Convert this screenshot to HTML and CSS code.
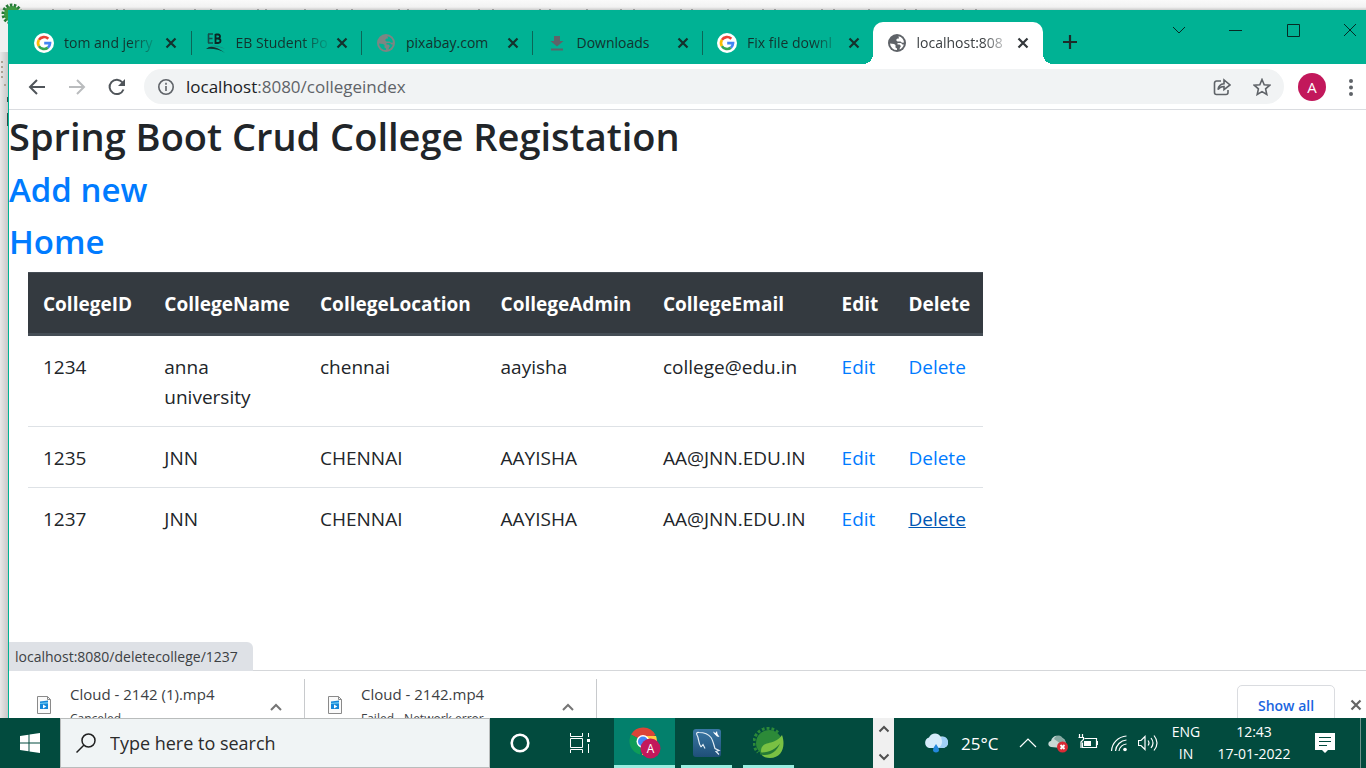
FILE: index.html
```html
<!DOCTYPE html>
<html lang="en">
<head>
<meta charset="utf-8">
<title>College index</title>
<link rel="stylesheet" href="styles.css">
</head>
<body>
<svg class="defs" aria-hidden="true">
  <symbol id="google" viewBox="0 0 20 20">
    <circle cx="10" cy="10" r="10" fill="#fff"/>
    <g fill="none" stroke-width="2.7">
      <path d="M14.3 5.8A6 6 0 0 0 4.9 6.9" stroke="#ea4335"/>
      <path d="M4.9 6.9a6 6 0 0 0 0 6.2" stroke="#fbbc05"/>
      <path d="M4.9 13.1a6 6 0 0 0 9 1.5" stroke="#34a853"/>
      <path d="M13.9 14.6A6 6 0 0 0 16 10.2H10.2" stroke="#4285f4"/>
    </g>
  </symbol>
  <symbol id="globe" viewBox="0 0 18 18">
    <circle cx="9" cy="9" r="9" fill="currentColor"/>
    <path d="M2 9.500l4 .5 1.500 1v2.500l1.500 1V16A7 7 0 0 1 2 9.500z" class="sea"/>
    <path d="M10.500 2.200a7 7 0 0 1 5.500 6.300l-2 .3-1.500-1.300h-3L8 6l1.500-1.500h1.500zM9.500 9h3.500l1.500 1.500h1.300a7 7 0 0 1-4.300 5l.5-2 1-1.500-1.500-1.500H9.500z" class="sea"/>
  </symbol>
  <symbol id="close" viewBox="0 0 12 12">
    <path d="M1.500 1.500l9 9M10.500 1.500l-9 9" stroke="currentColor" stroke-width="2.2" fill="none"/>
  </symbol>
  <symbol id="up" viewBox="0 0 12 8">
    <path d="M1 7l5-5 5 5" stroke="currentColor" stroke-width="2" fill="none"/>
  </symbol>
  <symbol id="video" viewBox="0 0 14 18">
    <path d="M.5.5h10l3 3v14H.5z" fill="#fafafa" stroke="#8a8a8a"/>
    <path d="M10.500.5v3h3" fill="none" stroke="#8a8a8a"/>
    <path d="M3 5.500l8-1v8.500H3z" fill="#1687d9"/>
    <path d="M3 7l8-1v1.500l-8 .5z" fill="#6cc9f2"/>
    <path d="M6 8.500v4l3.300-2z" fill="#fff"/>
  </symbol>
</svg>

<div class="desktop">
  <div class="behind" aria-hidden="true">
    <svg class="behind-logo" viewBox="0 0 22 22"><circle cx="11" cy="11" r="8" fill="#3c9a41"/><circle cx="11" cy="11" r="9" fill="none" stroke="#247a35" stroke-width="3" stroke-dasharray="2.500 1.500"/></svg>
    <div class="behind-title"></div>
    <svg class="behind-tools" viewBox="0 0 8 80"><g fill="#aaa294"><path d="M1 11h2v2H1zM1 16h2v2H1zM1 21h2v2H1zM1 26h2v2H1zM4 34h2v2H4z"/></g><path d="M7 47h1v5H7zM7 63h1v13H7z" fill="#305048"/></svg>
  </div>

  <section class="window">
    <header class="tabstrip">
      <nav class="tabs" aria-label="Tabs">
        <div class="tab"><svg class="fav fav-lg"><use href="#google"/></svg><span class="tab-title">tom and jerry</span><button class="x" aria-label="Close tab"><svg><use href="#close"/></svg></button></div>
        <div class="tab"><svg class="fav fav-lg" viewBox="0 0 20 20"><path d="M2 1h5M2 5.500h4.500M2 10h5M2.500 1v9" stroke="#174d4a" stroke-width="1.600" fill="none"/><path d="M9.500 1.500h2.500q2 .3 2 2t-2 2H9.500M12 5.500q2.500.3 2.500 2.200T12 10H9.500V1" stroke="#0b2524" stroke-width="1.800" fill="none"/><path d="M0 16q6-6 19 4-8-5-19-4z" fill="#12302f"/><path d="M2 14q8-4 17 2-8-4-17-2z" fill="#247a78"/></svg><span class="tab-title">EB Student Po</span><button class="x" aria-label="Close tab"><svg><use href="#close"/></svg></button></div>
        <div class="tab"><svg class="fav fav-muted"><use href="#globe"/></svg><span class="tab-title">pixabay.com</span><button class="x" aria-label="Close tab"><svg><use href="#close"/></svg></button></div>
        <div class="tab"><svg class="fav fav-down" viewBox="0 0 18 18"><path d="M6 2h6v5h3.500L9 12.500 2.500 7H6zM3 14.500h12v2H3z" fill="currentColor"/></svg><span class="tab-title">Downloads</span><button class="x" aria-label="Close tab"><svg><use href="#close"/></svg></button></div>
        <div class="tab"><svg class="fav fav-lg"><use href="#google"/></svg><span class="tab-title">Fix file downl</span><button class="x" aria-label="Close tab"><svg><use href="#close"/></svg></button></div>
        <div class="tab active"><svg class="fav"><use href="#globe"/></svg><span class="tab-title">localhost:808</span><button class="x" aria-label="Close tab"><svg><use href="#close"/></svg></button></div>
      </nav>
      <div class="strip-end">
        <button class="newtab" aria-label="New tab"><svg viewBox="0 0 16 16"><path d="M8 1v14M1 8h14" stroke="#1d2b29" stroke-width="2.200"/></svg></button>
        <div class="controls">
          <button aria-label="Search tabs"><svg viewBox="0 0 14 14"><path d="M1 4l6 6 6-6"/></svg></button>
          <button aria-label="Minimize"><svg viewBox="0 0 14 14"><path d="M0 7.500h13"/></svg></button>
          <button aria-label="Maximize"><svg viewBox="0 0 14 14"><path d="M1.500 1.500h12v12h-12z"/></svg></button>
          <button aria-label="Close"><svg viewBox="0 0 14 14"><path d="M1 1l12 12M13 1L1 13"/></svg></button>
        </div>
      </div>
    </header>

    <div class="toolbar">
      <button class="nav" aria-label="Back"><svg viewBox="0 0 18 18"><path d="M17 9H2M9 2L2 9l7 7"/></svg></button>
      <button class="nav off" aria-label="Forward"><svg viewBox="0 0 18 18"><path d="M1 9h15M9 2l7 7-7 7"/></svg></button>
      <button class="nav" aria-label="Reload"><svg viewBox="0 0 18 18"><path d="M15.500 11.500A7.200 7.200 0 1 1 14.500 4.500"/><path d="M17 1v7h-7z" class="solid"/></svg></button>
      <div class="omnibox">
        <svg class="info" viewBox="0 0 18 18"><circle cx="9" cy="9" r="7.200"/><path d="M9 8v5M9 4.800v2"/></svg>
        <div class="url" role="textbox" aria-label="Address"><b>localhost</b>:8080/collegeindex</div>
        <button aria-label="Share"><svg viewBox="0 0 18 18"><path d="M8 3H3.500A2 2 0 0 0 1.500 5v9.500a2 2 0 0 0 2 2H13a2 2 0 0 0 2-2V12"/><path d="M5 11.500C5.500 7.500 7.500 6 11 5.700V2l6 5-6 4.700V8.500c-3 0-4.500.8-6 3z"/></svg></button>
        <button aria-label="Bookmark"><svg viewBox="0 0 18 18"><path d="M9 1.500l2.200 5.200 5.600.5-4.200 3.700 1.200 5.600L9 13.600l-4.800 2.900 1.200-5.600L1.200 7.200l5.600-.5z"/></svg></button>
      </div>
      <button class="avatar" aria-label="Profile">A</button>
      <button class="menu" aria-label="Menu"><svg viewBox="0 0 4 18"><circle cx="2" cy="3" r="2"/><circle cx="2" cy="9.500" r="2"/><circle cx="2" cy="16" r="2"/></svg></button>
    </div>

    <main class="page">
      <h1>Spring Boot Crud College Registation</h1>
      <h2><a href="#new">Add new</a></h2>
      <h2><a href="#home">Home</a></h2>
      <table>
        <colgroup><col class="c-id"><col class="c-name"><col class="c-loc"><col class="c-admin"><col class="c-mail"><col class="c-edit"><col></colgroup>
        <thead><tr><th>CollegeID</th><th>CollegeName</th><th>CollegeLocation</th><th>CollegeAdmin</th><th>CollegeEmail</th><th>Edit</th><th>Delete</th></tr></thead>
        <tbody>
          <tr><td>1234</td><td>anna university</td><td>chennai</td><td>aayisha</td><td>college@edu.in</td><td><a href="#e1">Edit</a></td><td><a href="#d1">Delete</a></td></tr>
          <tr><td>1235</td><td>JNN</td><td>CHENNAI</td><td>AAYISHA</td><td>AA@JNN.EDU.IN</td><td><a href="#e2">Edit</a></td><td><a href="#d2">Delete</a></td></tr>
          <tr><td>1237</td><td>JNN</td><td>CHENNAI</td><td>AAYISHA</td><td>AA@JNN.EDU.IN</td><td><a href="#e3">Edit</a></td><td><a class="hovered" href="#d3">Delete</a></td></tr>
        </tbody>
      </table>
      <div class="status">localhost:8080/deletecollege/1237</div>
    </main>

    <footer class="downloads">
      <div class="dl"><svg class="file"><use href="#video"/></svg><div class="dl-text"><p>Cloud - 2142 (1).mp4</p><small>Canceled</small></div><button aria-label="Options"><svg><use href="#up"/></svg></button></div>
      <div class="dl"><svg class="file"><use href="#video"/></svg><div class="dl-text"><p>Cloud - 2142.mp4</p><small>Failed - Network error</small></div><button aria-label="Options"><svg><use href="#up"/></svg></button></div>
      <button class="showall">Show all</button>
      <button class="dl-close" aria-label="Close downloads"><svg><use href="#close"/></svg></button>
    </footer>
  </section>
</div>

<div class="taskbar">
  <button class="start" aria-label="Start"><svg viewBox="0 0 20 20"><path d="M0 3l8.500-1.200v7.700H0zM9.500 1.600L20 0v9.500H9.500zM0 10.500h8.500v7.700L0 17zM9.500 10.500H20V20L9.500 18.400z" fill="#fff"/></svg></button>
  <label class="search"><svg viewBox="0 0 20 20"><circle cx="12.500" cy="7.500" r="6.500"/><path d="M8 12l-7.500 7.500"/></svg><input type="text" placeholder="Type here to search" aria-label="Search"></label>
  <button class="task" aria-label="Cortana"><svg viewBox="0 0 20 20"><circle cx="10" cy="10" r="8.300" fill="none" stroke="#fff" stroke-width="2.600"/></svg></button>
  <button class="task" aria-label="Task view"><svg viewBox="0 0 20 20" fill="none" stroke="#fff"><path d="M.5 0v3.500h12V0M.5 5.500h12v9H.5zM.5 20v-3.500h12V20M18.500 0v4M18.500 11v9"/><path d="M17 6h3v3h-3z" fill="#fff" stroke="none"/></svg></button>
  <button class="app current" aria-label="Chrome"><svg viewBox="0 0 32 32"><path d="M14 14L2 7.500A14 14 0 0 1 26.500 8z" fill="#db4437"/><path d="M14 14L2 7.500a14 14 0 0 0 9 20z" fill="#0f9d58"/><path d="M14 9h13a14 14 0 0 1-14 19z" fill="#ffcd40"/><circle cx="14" cy="14.500" r="6.500" fill="#fff"/><circle cx="14" cy="14.500" r="5" fill="#4285f4"/><circle cx="21.500" cy="21.500" r="10" fill="#c2185b"/><text x="21.500" y="25.500" text-anchor="middle" class="badge-letter">A</text></svg></button>
  <button class="app" aria-label="MySQL Workbench"><svg viewBox="0 0 32 32"><defs><linearGradient id="my" x2="0" y2="1"><stop stop-color="#3a78a5"/><stop offset="1" stop-color="#1f4f78"/></linearGradient></defs><rect x="2" y="2" width="28" height="28" rx="3" fill="url(#my)"/><path d="M10 20C7 16 8 11 6 8c-1-2 0-3 2-2.500 6 0 9 1 12 5 2 3 3 8 4 11l4 2-3 1 3 3M10 20l2-2.500 2 4" fill="none" stroke="#e4eef5" stroke-width="1.200"/><path d="M22 4.500l2.500 1.500 1.500-2 .5 3 2 3-2.500-.5-3-3z" fill="#fff"/></svg></button>
  <button class="app" aria-label="Spring Tool Suite"><svg viewBox="0 0 32 32"><circle cx="16" cy="16" r="13" fill="#2c8a38"/><path d="M25 5.500A14 14 0 0 0 5 25.500" fill="none" stroke="#2c8a38" stroke-width="3" stroke-dasharray="2.800 2"/><path d="M29 8c4 11 0 23-12 23-6 0-9-2-9-7 0-11 14-5 21-16z" fill="#79c143"/><path d="M7 25.500c9 .5 15-3 20-9-4 9-10 13-20 11z" fill="#247a35"/></svg></button>
  <div class="tray">
    <div class="scroller"><button aria-label="Scroll up"><svg viewBox="0 0 12 8"><path d="M1.500 6.500L6 2l4.500 4.500"/></svg></button><button aria-label="Scroll down"><svg viewBox="0 0 12 8"><path d="M1.500 1.500L6 6l4.500-4.500"/></svg></button></div>
    <svg class="weather" viewBox="0 0 26 20"><path d="M6 15a5.500 5.500 0 0 1 0-10.500C8-.5 15-1 17.500 3.500c4-.5 7.500 2 7.500 6s-3 5.500-6 5.500z" fill="#d6ecfb"/><path d="M18 4.500c4-2 7 1 7 5S22 15 19 15h-4c4-2 5-6 3-10.500z" fill="#9fd0f6"/><path d="M13 11q6 8 0 8.500-6-.5 0-8.500z" fill="#2388dc"/></svg>
    <span class="temp">25°C</span>
    <svg class="ic chev" viewBox="0 0 18 20"><path d="M1 14l8-8 8 8"/></svg>
    <svg class="ic cloud" viewBox="0 0 20 20"><path d="M3 14C-1 13 0 8 3 8c1-5 7-7 10-3 4 0 5 3 4 6l-4 4z" fill="#c8d8d5" stroke="none"/><path d="M6 6c2-5 8-4 9 0 3 1 4 5 1 7z" fill="#87a9a2" stroke="none"/><circle cx="14.500" cy="14" r="5.500" fill="#d92a35" stroke="none"/><path d="M12.500 12l4 4M16.500 12l-4 4" stroke-width="1.800"/></svg>
    <svg class="ic batt" viewBox="0 0 20 20"><path d="M6.500 5.500h12v9h-14v-5M19.500 8v4M1.500 1v3M4.500 1v3M.5 4.500h5v2L3 9v6"/><path d="M6 8h7v5H6z" fill="#fff" stroke="none"/></svg>
    <svg class="ic wifi" viewBox="0 0 18 20"><path d="M1.500 18A16 16 0 0 1 16.500 3M5.500 18A12 12 0 0 1 16.500 7M9 18a8 8 0 0 1 7.500-7" /><circle cx="15" cy="16.500" r="1.800" fill="#fff" stroke="none"/></svg>
    <svg class="ic vol" viewBox="0 0 20 20"><path d="M.5 7.500H3l4-4v13l-4-4H.5zM10 7.500q2 2.500 0 5M13 5q4 5 0 10M16 2.500q6 7.500 0 15"/></svg>
    <div class="stack lang"><span>ENG</span><span>IN</span></div>
    <div class="stack clock"><span>12:43</span><span>17-01-2022</span></div>
    <svg class="note" viewBox="0 0 20 20"><path d="M0 0h20v17h-7l-3 3-3-3H0z" fill="#fff"/><path d="M4 4.500h12M4 8.500h12M4 12.500h8" stroke="#024b3e"/></svg>
    <i class="peek"></i>
  </div>
</div>
</body>
</html>
```
FILE: styles.css
```css
* { box-sizing: border-box; }
body {
  margin: 0;
  height: 100vh;
  display: flex;
  flex-direction: column;
  overflow: hidden;
  font-family: "Open Sans", "Noto Sans", sans-serif;
  color: #212529;
}
button { border: 0; padding: 0; background: none; font: inherit; color: inherit; display: grid; place-items: center; }
svg { display: block; }
.defs { position: absolute; width: 0; height: 0; }

/* Desktop and the window behind */
.desktop {
  position: relative;
  flex: 1;
  min-height: 0;
  padding: 10px 0 0 8px;
  display: flex;
  background: linear-gradient(90deg, #e8e8e8, #c8c8c8 8px);
}
.behind { position: absolute; inset: 0; height: 52px; background: linear-gradient(#fafafa, #f2f2f2 7px, #cccccc 10px, #f0f0f0 11px); }
.behind-logo { position: absolute; left: 1px; top: 3px; width: 22px; height: 22px; }
.behind-title {
  position: absolute; left: 52px; right: 380px; top: 9px; height: 1px;
  background:
    repeating-linear-gradient(90deg, #999 0 2px, transparent 2px 71px),
    repeating-linear-gradient(90deg, transparent 0 17px, #999 17px 19px, transparent 19px 47px);
}
.behind-tools { position: absolute; left: 0; top: 50px; width: 8px; height: 80px; }

/* Browser window */
.window {
  position: relative;
  flex: 1;
  min-width: 0;
  display: flex;
  flex-direction: column;
  overflow: hidden;
  background: #fff;
  border-left: 1px solid #00b294;
}
.tabstrip { display: flex; height: 54px; flex: none; padding-left: 11px; background: #00b294; }
.tabs { flex: 1; min-width: 0; display: grid; grid-template-columns: repeat(6, minmax(0, 1fr)); padding-top: 12px; }
.tab { position: relative; display: flex; align-items: center; padding: 0 13px 0 15px; color: #12332e; }
.tab:first-child, .tab.active { padding: 0 14px; }
.tab::after { content: ""; position: absolute; right: -1px; top: 9px; height: 24px; width: 1px; background: #0b6657; }
.tab:nth-child(5)::after { display: none; }
.fav { --sea: #00b294; width: 18px; height: 18px; margin: 0 11px 0 1px; color: #5f6368; flex: none; }
.sea { fill: var(--sea); }
.fav-lg { width: 20px; height: 20px; margin: 0 10px 0 0; }
.fav-muted { color: #7d8583; }
.tab-title {
  flex: 1; min-width: 0; white-space: nowrap; font-size: 14px; line-height: 20px;
  -webkit-mask-image: linear-gradient(90deg, #000 66px, transparent 96px);
  mask-image: linear-gradient(90deg, #000 66px, transparent 96px);
}
.tab:nth-child(3) .tab-title, .tab:nth-child(4) .tab-title { -webkit-mask-image: none; mask-image: none; }
.x { width: 12px; height: 20px; margin-left: 6px; color: #14322d; }
.x svg { width: 12px; height: 12px; }
.tab.active { background: #fff; border-radius: 10px 10px 0 0; color: #3c4043; }
.tab.active .fav { --sea: #fff; }
.tab.active .x { color: #33373b; }
.tab.active::before, .tab.active::after {
  content: ""; position: absolute; top: auto; bottom: 0; width: 10px; height: 10px;
  background: radial-gradient(circle at 0 0, transparent 10px, #fff 10px);
}
.tab.active::before { left: -10px; }
.tab.active::after { right: -10px; background: radial-gradient(circle at 100% 0, transparent 10px, #fff 10px); }
.strip-end { width: 323px; display: flex; justify-content: space-between; }
.newtab { width: 16px; height: 64px; margin-left: 19px; }
.newtab svg { width: 16px; height: 16px; }
.controls { display: flex; height: 39px; margin-right: -12px; }
.controls button { width: 57px; }
.controls svg { width: 14px; height: 14px; fill: none; stroke: #062a24; }

.toolbar { display: flex; align-items: center; flex: none; height: 46px; padding: 0 13px 0 19px; border-bottom: 1px solid #dadce0; }
.nav { width: 18px; height: 18px; margin-right: 22px; }
.nav svg { width: 18px; height: 18px; fill: none; stroke: #50555a; stroke-width: 2; }
.nav svg .solid { fill: #50555a; stroke: none; }
.nav.off svg { stroke: #babcbe; }
.omnibox { flex: 1; display: flex; align-items: center; gap: 22px; height: 35px; margin-left: -4px; padding: 0 13px; border-radius: 18px; background: #f1f3f4; }
.omnibox svg { width: 18px; height: 18px; fill: none; stroke: #5f6368; stroke-width: 1.6; flex: none; }
.omnibox .info { margin-right: -11px; }
.url { flex: 1; font-size: 17px; line-height: 24px; color: #5f6368; }
.url b { font-weight: 400; color: #202124; }
.avatar { width: 28px; height: 28px; margin: 0 23px 0 14px; border-radius: 50%; background: #c2185b; color: #fff; font-size: 15px; line-height: 20px; }
.menu svg { width: 4px; height: 18px; fill: #5f6368; }

/* Page */
.page { position: relative; flex: 1; min-height: 0; font-size: 19px; line-height: 30px; }
h1, h2 { margin: 0; font-weight: 600; }
h1 { font-size: 38px; line-height: 48px; margin: 2px 0 9px; }
h2 { font-size: 33px; line-height: 42px; margin-bottom: 10px; }
a { color: #007bff; text-decoration: none; }
table { width: 70.4%; margin: -1px 0 0 19px; border-collapse: collapse; table-layout: fixed; }
.c-id { width: 12.7%; }
.c-name { width: 16.3%; }
.c-loc { width: 18.9%; }
.c-admin { width: 17%; }
.c-mail { width: 18.7%; }
.c-edit { width: 7%; }
th, td { padding: 16px 15px 14px; text-align: left; vertical-align: top; }
th { padding-right: 0; background: #343a40; color: #fff; border-top: 1px solid #454d55; border-bottom: 3px solid #454d55; font-weight: 700; }
td { border-top: 1px solid #dee2e6; }
.hovered { color: #0056b3; text-decoration: underline; }
.status { position: absolute; left: -1px; bottom: -1px; height: 29px; padding: 0 15px 0 7px; border-radius: 0 6px 0 0; background: #dee1e6; color: #3c4043; font-size: 14px; line-height: 29px; }

/* Downloads shelf */
.downloads { flex: none; display: flex; height: 48px; overflow: hidden; border-top: 1px solid #d5d7da; background: #fff; padding-right: 4px; }
.dl { display: flex; width: 292px; margin-top: 8px; padding: 0 22px 0 23px; border-right: 1px solid #c8cacd; }
.dl:first-child { width: 296px; padding-left: 28px; }
.file { width: 14px; height: 18px; margin: 17px 19px 0 0; flex: none; }
.dl-text { flex: 1; color: #3c4043; }
.dl p { margin: 5px 0 6px; font-size: 15px; line-height: 20px; }
.dl small { display: block; font-size: 12px; line-height: 18px; }
.dl button { height: 8px; margin-top: 24px; color: #757575; }
.dl button svg { width: 12px; height: 8px; }
.showall { width: 98px; height: 40px; margin: 14px 15px 0 auto; border: 1px solid #dadce0; border-radius: 5px; color: #1a66e0; font-size: 14px; font-weight: 600; }
.dl-close { width: 12px; height: 12px; margin-top: 28px; color: #666; }
.dl-close svg { width: 12px; height: 12px; }

/* Taskbar */
.taskbar { display: flex; flex: none; height: 50px; background: #024b3e; color: #fff; }
.start { width: 60px; }
.start svg { width: 20px; height: 20px; }
.search { flex: 0 0 430px; display: flex; align-items: center; gap: 14px; padding-left: 15px; background: #f0f4f5; border: 1px solid #b9bcbc; }
.search svg { width: 20px; height: 20px; fill: none; stroke: #202020; stroke-width: 1.5; }
.search input { flex: 1; min-width: 0; border: 0; padding: 0; background: none; font: 18px "Open Sans", "Noto Sans", sans-serif; }
.search input::placeholder { color: #2b2b2b; opacity: 1; }
.task { width: 60px; }
.task svg { width: 20px; height: 20px; }
.app { width: 51px; border-bottom: 3px solid #98efe0; padding-top: 3px; margin-right: 11px; }
.app svg { width: 32px; height: 32px; }
.app.current { width: 61px; background: #03806c; margin: 0 6px 0 4px; }
.badge-letter { fill: #fff; font-size: 12px; }
.tray { margin-left: auto; display: flex; align-items: center; }
.scroller { width: 21px; height: 50px; padding: 7px 0; margin-right: 29px; display: flex; flex-direction: column; align-items: center; justify-content: space-between; background: #f0f0f0; }
.scroller svg { width: 12px; height: 8px; fill: none; stroke: #505050; stroke-width: 2; }
.weather { width: 26px; height: 20px; margin-right: 12px; }
.temp { width: 58px; font-size: 17px; line-height: 24px; margin-top: 2px; }
.ic { width: 20px; height: 20px; fill: none; stroke: #fff; stroke-width: 1.2; margin-right: 10px; }
.chev { width: 18px; margin-right: 11px; }
.batt { margin-right: 12px; }
.wifi { width: 18px; }
.vol { margin-right: 13px; }
.stack { display: grid; justify-items: center; font-size: 14px; line-height: 22px; }
.lang { width: 30px; margin-right: 14px; }
.clock { width: 78px; margin-right: 22px; }
.note { width: 20px; height: 20px; margin-right: 25px; }
.peek { width: 1px; height: 50px; margin-right: 5px; background: #6d938b; }
```
